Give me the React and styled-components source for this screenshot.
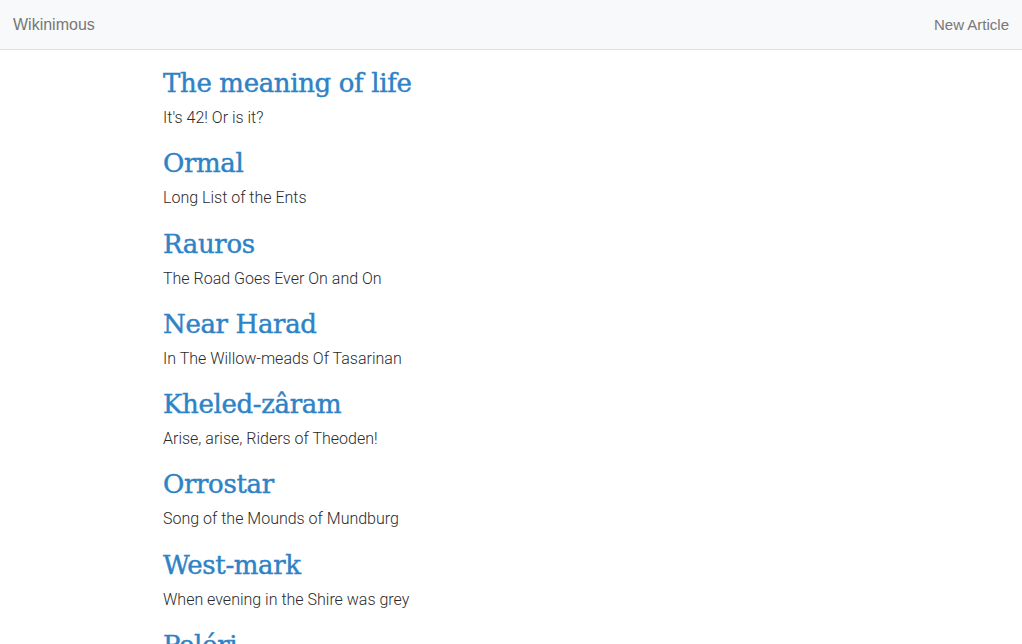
import React from 'react';
import styled, { createGlobalStyle } from 'styled-components';

const GlobalStyle = createGlobalStyle`
  body {
    margin: 0;
    background: #fff;
    font-family: Roboto, "Liberation Sans", sans-serif;
  }
`;

const Navbar = styled.nav`
  height: 50px;
  box-sizing: border-box;
  display: flex;
  align-items: center;
  justify-content: space-between;
  padding: 0 13px;
  background: #f8f9fa;
  border-bottom: 1px solid #dee2e6;
  font-family: "Liberation Sans", Arial, sans-serif;
`;

const Brand = styled.a`
  font-size: 16px;
  color: #777;
  text-decoration: none;
`;

const NavLink = styled.a`
  font-size: 15px;
  color: #777;
  text-decoration: none;
`;

const List = styled.main`
  padding: 13px 0 0 163px;
  display: flex;
  flex-direction: column;
`;

const Item = styled.article`
  height: 80.3px;
  display: flex;
  flex-direction: column;
`;

const Title = styled.a`
  font-family: "DejaVu Serif", serif;
  font-size: 26px;
  line-height: 40px;
  color: #2e82c6;
  text-decoration: none;
  letter-spacing: -0.35px;
  -webkit-text-stroke: 0.45px currentColor;
`;

const Subtitle = styled.p`
  margin: 0;
  font-family: Roboto, sans-serif;
  font-weight: 300;
  font-size: 16px;
  line-height: 30px;
  color: #2b2b2b;
`;

const articles = [
  ['The meaning of life', "It's 42! Or is it?"],
  ['Ormal', 'Long List of the Ents'],
  ['Rauros', 'The Road Goes Ever On and On'],
  ['Near Harad', 'In The Willow-meads Of Tasarinan'],
  ['Kheled-zâram', 'Arise, arise, Riders of Theoden!'],
  ['Orrostar', 'Song of the Mounds of Mundburg'],
  ['West-mark', 'When evening in the Shire was grey'],
  ['Pelóri', 'O Orofarnë, Lassemista, Carnimírië!'],
];

export default function App() {
  return (
    <>
      <GlobalStyle />
      <Navbar>
        <Brand href="#">Wikinimous</Brand>
        <NavLink href="#">New Article</NavLink>
      </Navbar>
      <List>
        {articles.map(([title, sub]) => (
          <Item key={title}>
            <Title href="#">{title}</Title>
            <Subtitle>{sub}</Subtitle>
          </Item>
        ))}
      </List>
    </>
  );
}
